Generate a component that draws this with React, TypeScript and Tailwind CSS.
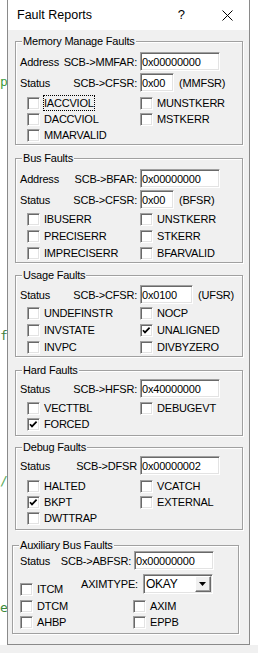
import React from "react";

const font = "font-['Liberation_Sans',Arial,sans-serif]";
const sunken =
  "border border-t-[#a0a0a0] border-l-[#a0a0a0] border-r-white border-b-white shadow-[inset_1px_1px_0_#696969,inset_-1px_-1px_0_#e3e3e3]";

function Check({ checked }: { checked?: boolean }) {
  return (
    <span className={`relative flex-none w-[13px] h-[13px] bg-white ${sunken}`}>
      {checked && (
        <svg className="absolute left-[1px] top-[1px]" width="9" height="9" viewBox="0 0 9 9">
          <path d="M1 4.2L3 6.4L7.6 1.6" fill="none" stroke="#000" strokeWidth="1.7" />
        </svg>
      )}
    </span>
  );
}

function Item({ label, checked, focus }: { label: string; checked?: boolean; focus?: boolean }) {
  return (
    <div className="flex items-center h-[16px]">
      <Check checked={checked} />
      <span className={`ml-[4px] leading-[14px] ${focus ? "outline-1 outline-dotted outline-black" : ""}`}>{label}</span>
    </div>
  );
}

function Field({ value, w }: { value: string; w: string }) {
  return (
    <div className={`flex items-center h-[19px] ${w} bg-white pl-[1px] leading-[14px] ${sunken}`}>{value}</div>
  );
}

function RegRow({
  name,
  reg,
  value,
  w,
  suffix,
  block = "w-[117px]",
  pad = "pl-[4px]",
  className = "",
}: {
  name: string;
  reg: string;
  value: string;
  w: string;
  suffix?: string;
  block?: string;
  pad?: string;
  className?: string;
}) {
  return (
    <div className={`flex items-center h-[19px] ${pad} ${className}`}>
      <div className={`flex justify-between ${block} leading-[14px]`}>
        <span>{name}</span>
        <span>{reg}</span>
      </div>
      <div className="ml-[3px]">
        <Field value={value} w={w} />
      </div>
      {suffix && <span className="ml-[5px] leading-[14px]">{suffix}</span>}
    </div>
  );
}

function Group({ title, className, children }: { title: string; className: string; children: React.ReactNode }) {
  return (
    <div
      className={`relative border border-[#a0a0a0] shadow-[inset_1px_1px_0_#fff,1px_1px_0_#fff] ${className}`}
    >
      <span className="absolute left-[6px] -top-[8px] px-[1px] bg-[#f0f0f0] leading-[14px]">{title}</span>
      {children}
    </div>
  );
}

export default function App() {
  return (
    <div className={`w-[258px] h-[653px] flex flex-col bg-white text-black text-[11px] tracking-[-0.2px] ${font}`}>
      <div className="flex h-[645px]">
        {/* editor behind the dialog */}
        <div className="w-[7px] flex-none flex flex-col overflow-hidden font-['DejaVu_Sans_Mono',monospace] text-[13px] leading-[15px] tracking-normal">
          <span className="mt-[74px] text-[#3c9c3c]">p</span>
          <span className="mt-[239px] text-[#3f7f3f]">f</span>
          <span className="mt-[130px] text-[#5aaa5a]">/</span>
          <span className="mt-[112px] text-[#3a8a3a]">e</span>
        </div>

        {/* dialog */}
        <div className="w-[243px] flex-none flex flex-col border-x border-b border-[#8a8a8a] bg-[#f0f0f0]">
          <div className="flex items-center h-[30px] bg-white pl-[9px] pr-[16px] tracking-normal">
            <span className="flex-1 text-[12.5px]">Fault Reports</span>
            <span className="text-[13px]">?</span>
            <svg className="ml-[37px]" width="11" height="11" viewBox="0 0 11 11">
              <path d="M0.5 0.5L10.5 10.5M10.5 0.5L0.5 10.5" stroke="#000" strokeWidth="1" />
            </svg>
          </div>

          <div className="flex flex-col">
            <Group title="Memory Manage Faults" className="mt-[11px] ml-[7px] mr-[6px] pt-[10px] pb-[1px]">
              <RegRow name="Address" reg="SCB->MMFAR:" value="0x00000000" w="w-[80px]" />
              <RegRow name="Status" reg="SCB->CFSR:" value="0x00" w="w-[34px]" suffix="(MMFSR)" className="mt-[2px]" />
              <div className="grid grid-cols-[113px_auto] pl-[11px] mt-[3px]">
                <Item label="IACCVIOL" focus />
                <Item label="MUNSTKERR" />
                <Item label="DACCVIOL" />
                <Item label="MSTKERR" />
                <Item label="MMARVALID" />
              </div>
            </Group>

            <Group title="Bus Faults" className="mt-[13px] ml-[7px] mr-[6px] pt-[10px] pb-[1px]">
              <RegRow name="Address" reg="SCB->BFAR:" value="0x00000000" w="w-[80px]" />
              <RegRow name="Status" reg="SCB->CFSR:" value="0x00" w="w-[34px]" suffix="(BFSR)" className="mt-[2px]" />
              <div className="grid grid-cols-[113px_auto] gap-y-[1px] pl-[11px] mt-[2px]">
                <Item label="IBUSERR" />
                <Item label="UNSTKERR" />
                <Item label="PRECISERR" />
                <Item label="STKERR" />
                <Item label="IMPRECISERR" />
                <Item label="BFARVALID" />
              </div>
            </Group>

            <Group title="Usage Faults" className="mt-[12px] ml-[7px] mr-[6px] pt-[9px] pb-[1px]">
              <RegRow name="Status" reg="SCB->CFSR:" value="0x0100" w="w-[53px]" suffix="(UFSR)" />
              <div className="grid grid-cols-[113px_auto] gap-y-[1px] pl-[11px] mt-[1px]">
                <Item label="UNDEFINSTR" />
                <Item label="NOCP" />
                <Item label="INVSTATE" />
                <Item label="UNALIGNED" checked />
                <Item label="INVPC" />
                <Item label="DIVBYZERO" />
              </div>
            </Group>

            <Group title="Hard Faults" className="mt-[13px] ml-[7px] mr-[6px] pt-[8px] pb-[3px]">
              <RegRow name="Status" reg="SCB->HFSR:" value="0x40000000" w="w-[80px]" />
              <div className="grid grid-cols-[113px_auto] pl-[11px] mt-[2px]">
                <Item label="VECTTBL" />
                <Item label="DEBUGEVT" />
                <Item label="FORCED" checked />
              </div>
            </Group>

            <Group title="Debug Faults" className="mt-[11px] ml-[7px] mr-[6px] pt-[8px] pb-[3px]">
              <RegRow name="Status" reg="SCB->DFSR" value="0x00000002" w="w-[80px]" />
              <div className="grid grid-cols-[113px_auto] pl-[11px] mt-[3px]">
                <Item label="HALTED" />
                <Item label="VCATCH" />
                <Item label="BKPT" checked />
                <Item label="EXTERNAL" />
                <Item label="DWTTRAP" />
              </div>
            </Group>

            <Group title="Auxiliary Bus Faults" className="mt-[15px] ml-[4px] mr-[10px] pt-[5px] pb-[3px]">
              <RegRow
                name="Status"
                reg="SCB->ABFSR:"
                value="0x00000000"
                w="w-[80px]"
                block="w-[111px]"
                pad="pl-[7px]"
              />
              <div className="flex items-start pl-[7px] mt-[4px]">
                <div className="w-[61px] mt-[7px]">
                  <Item label="ITCM" />
                </div>
                <div className="flex items-center h-[20px]">
                  <span className="leading-[14px]">AXIMTYPE:</span>
                  <div className={`ml-[5px] flex items-center w-[70px] h-[20px] bg-white pl-[2px] ${sunken}`}>
                    <span className="flex-1 leading-[14px] text-[12px]">OKAY</span>
                    <span className="flex items-center justify-center w-[16px] h-[16px] mr-[1px] bg-[#f0f0f0] border border-t-white border-l-white border-r-[#696969] border-b-[#696969] shadow-[inset_-1px_-1px_0_#a0a0a0]">
                      <svg width="7" height="4" viewBox="0 0 7 4">
                        <path d="M0 0H7L3.5 4Z" fill="#000" />
                      </svg>
                    </span>
                  </div>
                </div>
              </div>
              <div className="grid grid-cols-[113px_auto] pl-[7px] mt-[1px]">
                <Item label="DTCM" />
                <Item label="AXIM" />
                <Item label="AHBP" />
                <Item label="EPPB" />
              </div>
            </Group>
          </div>
        </div>

        <div className="flex-1 bg-white" />
      </div>
      <div className="flex-1 bg-[#f0f0f0]" />
    </div>
  );
}
